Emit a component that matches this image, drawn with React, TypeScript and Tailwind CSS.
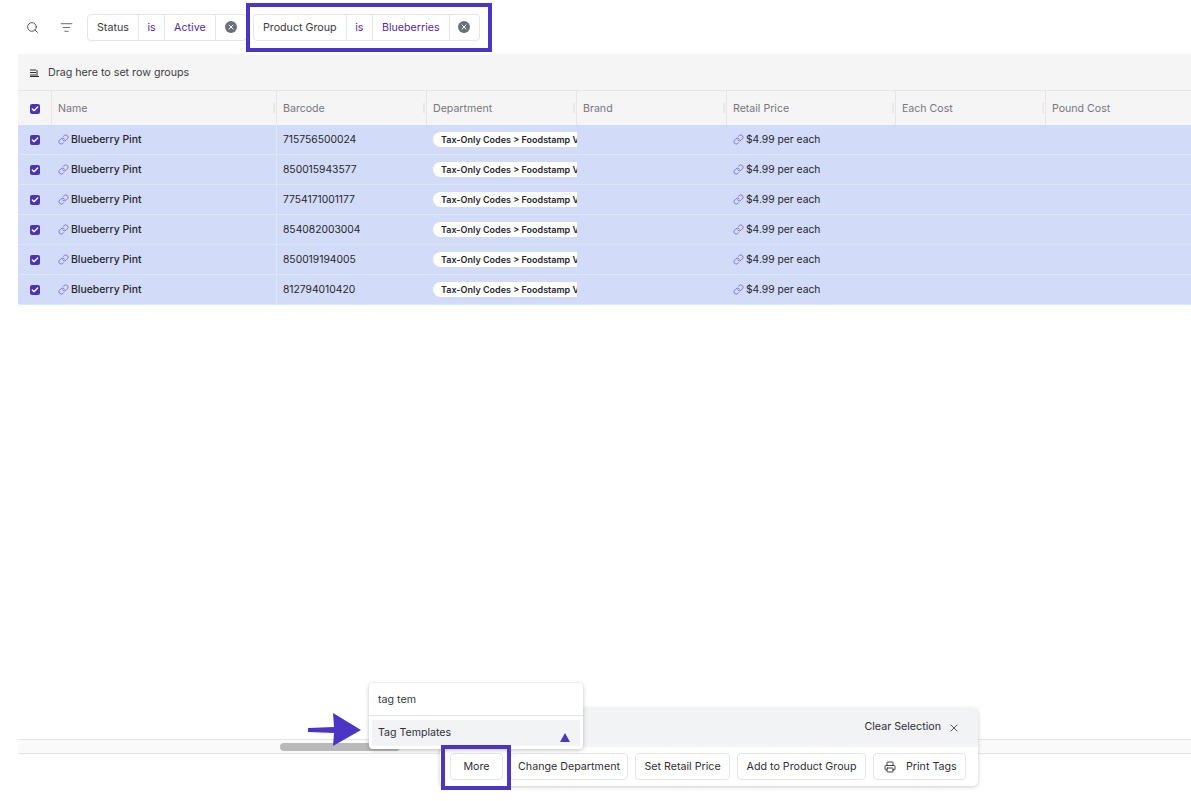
import React from "react";
import { Search, ListFilter, Link, Check, X, Printer } from "lucide-react";

const barcodes = [
  "715756500024",
  "850015943577",
  "7754171001177",
  "854082003004",
  "850019194005",
  "812794010420",
];

const Box = () => (
  <span className="flex h-[10px] w-[10px] items-center justify-center rounded-[2px] bg-[#4c35b5]">
    <Check className="h-2 w-2 text-white" strokeWidth={4} />
  </span>
);

const ClearDot = () => (
  <span className="flex h-[12px] w-[12px] items-center justify-center rounded-full bg-[#6b7078]">
    <X className="h-2 w-2 text-white" strokeWidth={3} />
  </span>
);

const FilterChip = ({ name, value }: { name: string; value: string }) => (
  <div className="flex h-[27px] items-center whitespace-nowrap rounded-[4px] border border-[#e5e5e7] bg-white text-[10.7px]">
    <span className="flex h-full items-center border-r border-[#e5e5e7] px-[9px] pt-[2px] text-[#3a3a40]">{name}</span>
    <span className="flex h-full items-center border-r border-[#e5e5e7] px-[8.5px] pt-[2px] text-[#5b2a96]">is</span>
    <span className="flex h-full items-center border-r border-[#e5e5e7] px-[9px] pt-[2px] text-[#5b2a96]">{value}</span>
    <span className="flex h-full w-[31px] items-center justify-center">
      <ClearDot />
    </span>
  </div>
);

const HeadCell = ({ label, className }: { label: string; className: string }) => (
  <div className={`relative flex h-full shrink-0 items-center border-r border-[#e6e6e8] px-[6px] pt-[1px] text-[10.6px] text-[#77777d] ${className}`}>
    {label}
    <span className="absolute right-[1px] top-[12px] h-[10px] w-[2px] bg-[#e8e8ea]" />
  </div>
);

const ActionButton = ({ children, className = "" }: { children: React.ReactNode; className?: string }) => (
  <button className={`flex h-[27px] items-center rounded-[4px] border border-[#e5e5e7] bg-white pt-[1px] text-[10.7px] text-[#2f2f35] ${className}`}>
    {children}
  </button>
);

export default function App() {
  return (
    <div className="relative flex h-[801px] w-[1191px] flex-col overflow-hidden bg-white pl-[18px] font-['Inter',sans-serif]">
      {/* Filter bar */}
      <div className="flex h-[54px] shrink-0 items-center pl-[8px]">
        <Search className="h-[13px] w-[13px] text-[#3d3d43]" strokeWidth={1.6} />
        <ListFilter className="ml-[21px] h-[13px] w-[13px] text-[#55555b]" strokeWidth={1.6} />
        <div className="ml-[14px] flex items-center gap-[6px]">
          <div className="w-[160px] shrink-0">
            <FilterChip name="Status" value="Active" />
          </div>
          <div className="w-[227px] shrink-0">
            <FilterChip name="Product Group" value="Blueberries" />
          </div>
        </div>
      </div>

      {/* Row groups */}
      <div className="flex h-[37px] shrink-0 items-center gap-[9px] border-b border-[#e6e6e8] bg-[#f5f5f5] pl-[12px] pt-[2px] text-[10.7px] text-[#3d3d43]">
        <svg width="9" height="8" viewBox="0 0 9 8" className="text-[#2f2f35]">
          <path d="M0 1h6M0 3.5h6M0 6h6M0 7.5h9M7 1v6" stroke="currentColor" strokeWidth="1" fill="none" />
        </svg>
        Drag here to set row groups
      </div>

      {/* Header */}
      <div className="flex h-[34px] shrink-0 items-center bg-[#f5f5f5]">
        <div className="flex h-full w-[34px] shrink-0 items-center justify-center border-r border-[#e6e6e8] pt-[1px]">
          <Box />
        </div>
        <HeadCell label="Name" className="w-[225px]" />
        <HeadCell label="Barcode" className="w-[150px]" />
        <HeadCell label="Department" className="w-[150px]" />
        <HeadCell label="Brand" className="w-[150px]" />
        <HeadCell label="Retail Price" className="w-[169px]" />
        <HeadCell label="Each Cost" className="w-[150px]" />
        <div className="flex h-full flex-1 items-center px-[6px] pt-[1px] text-[10.6px] text-[#77777d]">Pound Cost</div>
      </div>

      {/* Rows */}
      <div className="shrink-0">
        {barcodes.map((code) => (
          <div key={code} className="flex h-[30px] items-center border-b border-[#dfe6fa] bg-[#d2dcf9] text-[10.3px] text-[#26262c]">
            <div className="flex w-[34px] shrink-0 items-center justify-center">
              <Box />
            </div>
            <div className="flex h-full w-[225px] shrink-0 items-center gap-[2px] border-r border-[#dfe6fa] pl-[6px] text-[10.4px] font-medium">
              <Link className="h-[11px] w-[11px] text-[#5a4bb0]" strokeWidth={1.4} />
              Blueberry Pint
            </div>
            <div className="flex h-full w-[150px] shrink-0 items-center pl-[6px]">{code}</div>
            <div className="flex h-full w-[150px] shrink-0 items-center overflow-hidden pl-[6px]">
              <span className="flex h-[15px] items-center whitespace-nowrap rounded-full bg-white pl-[8px] pr-[16px] text-[9px] font-semibold text-[#26262c]">
                Tax-Only Codes &gt; Foodstamp Various
              </span>
            </div>
            <div className="w-[150px] shrink-0" />
            <div className="flex h-full w-[169px] shrink-0 items-center gap-[2px] pl-[6px]">
              <Link className="h-[11px] w-[11px] text-[#5a4bb0]" strokeWidth={1.4} />
              $4.99 per each
            </div>
          </div>
        ))}
      </div>

      {/* Horizontal scrollbar */}
      <div className="mt-auto mb-[47px] flex h-[15px] shrink-0 items-center border-y border-[#e6e6e8] bg-[#fafafa] pl-[262px]">
        <div className="h-[8px] w-[120px] rounded-full bg-[#b9b9b9]" />
      </div>

      {/* Selection toolbar */}
      <div className="absolute left-[440px] top-[708px] w-[538px] rounded-[5px] bg-white shadow-[0_1px_4px_rgba(0,0,0,0.2)]">
        <div className="flex h-[39px] items-center justify-end gap-[7px] rounded-t-[5px] bg-[#f2f3f5] pr-[18px] text-[10.7px] text-[#2f2f35]">
          Clear Selection
          <X className="h-[12px] w-[12px]" strokeWidth={1.6} />
        </div>
        <div className="flex h-[39px] items-center gap-[7px] pl-[10px]">
          <ActionButton className="w-[53px] justify-center">More</ActionButton>
          <ActionButton className="w-[118px] justify-center">Change Department</ActionButton>
          <ActionButton className="w-[95px] justify-center">Set Retail Price</ActionButton>
          <ActionButton className="w-[129px] justify-center">Add to Product Group</ActionButton>
          <ActionButton className="w-[93px] gap-[10px] pl-[10px]">
            <Printer className="h-[12px] w-[12px]" strokeWidth={1.8} />
            Print Tags
          </ActionButton>
        </div>
      </div>

      {/* Search popover */}
      <div className="absolute left-[369px] top-[683px] w-[214px] rounded-[4px] bg-white shadow-[0_1px_4px_rgba(0,0,0,0.25)]">
        <div className="flex h-[33px] items-center border-b border-[#e5e5e7] pl-[9px] pt-[2px] text-[10.7px] text-[#3a3a40]">tag tem</div>
        <div className="px-[3px] pb-[3px] pt-[4px]">
          <div className="relative flex h-[26px] items-center rounded-[2px] bg-[#f2f3f5] pl-[6px] text-[10.6px] text-[#2f2f35]">
            Tag Templates
            <svg width="10" height="9" viewBox="0 0 10 9" className="absolute left-[188px] top-[13px]">
              <path d="M5 0L10 9H0Z" fill="#4c35c4" />
            </svg>
          </div>
        </div>
      </div>

      {/* Annotations */}
      <div className="absolute left-[246px] top-[3px] h-[49px] w-[246px] border-[4px] border-[#4c35c4]" />
      <div className="absolute left-[441px] top-[745px] h-[45px] w-[70px] border-[4px] border-[#4c35c4]" />
      <svg width="54" height="34" viewBox="0 0 54 34" className="absolute left-[308px] top-[713px]">
        <path d="M0 15L26 14L25 0L53 17L25 33L26 20L0 19Z" fill="#4c35c4" />
      </svg>
    </div>
  );
}
